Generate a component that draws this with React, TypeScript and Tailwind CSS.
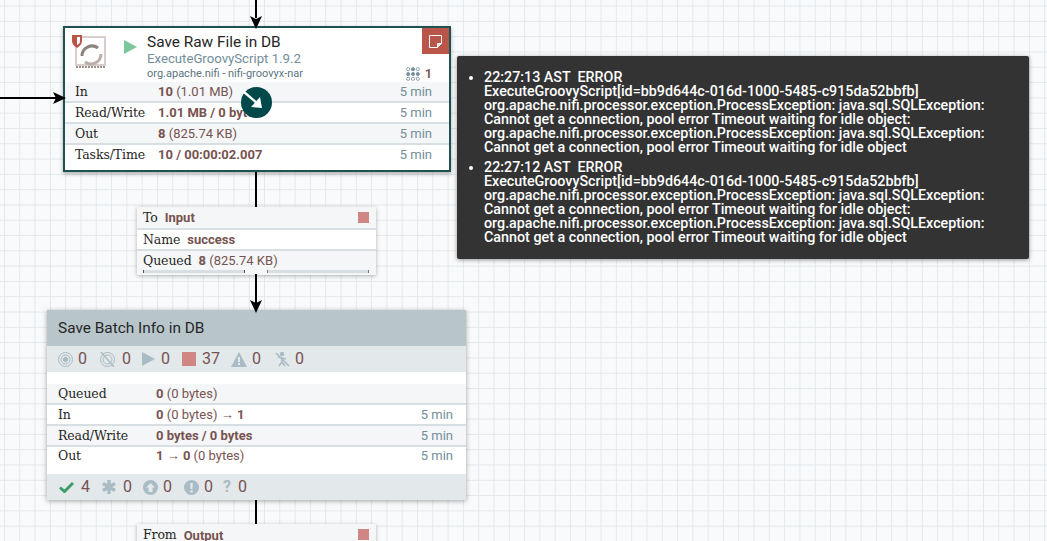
import React from 'react';

const slab = "font-['DejaVu_Serif',serif]";

const Row = ({ label, value, time, shade, h, top }: { label: string; value: React.ReactNode; time?: string; shade?: boolean; h: string; top?: boolean }) => (
    <div className={`flex ${top ? 'items-start' : 'items-center pt-[1px]'} ${h} ${shade ? 'bg-[#f4f6f7]' : 'bg-white'} border-b-2 border-[#d7dfe2] last:border-b-0`}>
        <div className={`${slab} text-[12.5px] text-[#262626] w-[93px] pl-[10px] pt-[1px] shrink-0 tracking-[-0.1px]`}>{label}</div>
        <div className="flex-1 text-[13px] text-[#775351] whitespace-nowrap">{value}</div>
        {time && <div className="text-[13px] text-[#728e9b] pr-[17px]">{time}</div>}
    </div>
);

const B = ({ children }: { children: React.ReactNode }) => <span className="font-bold">{children}</span>;

const Processor = () => (
    <div className="absolute left-[63px] top-[26px] w-[388px] h-[146px] bg-white border-2 border-[#1f5153] shadow-[0_2px_4px_rgba(0,0,0,0.3)]">
        <div className="flex h-[54px] relative">
            <div className="w-[59px] relative shrink-0">
                <svg viewBox="0 0 36 36" className="absolute left-[7px] top-[7px] w-[36px] h-[36px]">
                    <rect x="4" y="2" width="29" height="28" fill="none" stroke="#d8cfcc" strokeWidth="2" />
                    <path d="M4 32h29" stroke="#a08f8a" strokeWidth="2" strokeDasharray="2 1" />
                    <path d="M10 21a10 10 0 0 1 16-8" fill="none" stroke="#8f8380" strokeWidth="3" />
                    <path d="M29 19a10 10 0 0 1-16 8" fill="none" stroke="#bcaeaa" strokeWidth="3" />
                    <path d="M0 0h10v6c0 3-2 5-5 7-3-2-5-4-5-7z" fill="#ba554a" />
                    <path d="M5 2h3v4c0 2-1 3-3 4z" fill="#fff" />
                </svg>
            </div>
            <div className="w-[23px] shrink-0">
                <svg viewBox="0 0 13 14" className="w-[13px] h-[14px] mt-[12px]"><path d="M0 0l13 7-13 7z" fill="#7dc79c" /></svg>
            </div>
            <div className="pt-[5px] font-['Roboto',sans-serif]">
                <div className="text-[15.4px] leading-[18px] text-[#262626]">Save Raw File in DB</div>
                <div className="text-[13.2px] leading-[15px] text-[#728e9b]">ExecuteGroovyScript 1.9.2</div>
                <div className="text-[11px] leading-[14px] mt-[1px] text-[#5b7480]">org.apache.nifi - nifi-groovyx-nar</div>
            </div>
            <div className="absolute right-0 top-0 w-[27px] h-[26px] bg-[#ba554a] flex items-center justify-center">
                <svg viewBox="0 0 13 13" className="w-[13px] h-[13px]"><path d="M.5.5h12v8l-4 4h-8z" fill="none" stroke="#fff" strokeWidth="1" /><path d="M8.5 12.5v-4h4" fill="#f6d9d5" stroke="#fff" strokeWidth="1" /></svg>
            </div>
            <div className="absolute right-[17px] top-[37px] flex items-center gap-[5px]">
                <svg viewBox="0 0 14 14" className="w-[14px] h-[14px]" fill="none" stroke="#728e9b" strokeWidth="0.8">
                    <circle cx="2.2" cy="2.2" r="1.6" /><circle cx="7" cy="2.2" r="1.6" fill="#728e9b" /><circle cx="11.8" cy="2.2" r="1.6" />
                    <circle cx="2.2" cy="7" r="1.6" fill="#728e9b" /><circle cx="7" cy="7" r="1.6" fill="#728e9b" /><circle cx="11.8" cy="7" r="1.6" fill="#728e9b" />
                    <circle cx="2.2" cy="11.8" r="1.6" /><circle cx="7" cy="11.8" r="1.6" /><circle cx="11.8" cy="11.8" r="1.6" />
                </svg>
                <span className="text-[12px] font-bold text-[#775351] font-['Roboto',sans-serif]">1</span>
            </div>
        </div>
        <div className="font-['Roboto',sans-serif]">
            <Row h="h-[21px]" shade label="In" value={<><B>10</B> (1.01 MB)</>} time="5 min" />
            <Row h="h-[21px]" label="Read/Write" value={<B>1.01 MB / 0 bytes</B>} time="5 min" />
            <Row h="h-[21px]" shade label="Out" value={<><B>8</B> (825.74 KB)</>} time="5 min" />
            <Row h="h-[25px]" top label="Tasks/Time" value={<B>10 / 00:00:02.007</B>} time="5 min" />
        </div>
        <div className="absolute left-[176px] top-[59px] w-[31px] h-[31px] rounded-full bg-[#004849]">
            <svg viewBox="0 0 31 31" className="w-[31px] h-[31px]">
                <path d="M3 5l14 12" stroke="#fff" strokeWidth="2.4" fill="none" />
                <path d="M21 21L10 20L19 10z" fill="#fff" />
            </svg>
        </div>
    </div>
);

const LabelRow = ({ k, v, shade, h }: { k: string; v: React.ReactNode; shade?: boolean; h: string }) => (
    <div className={`flex items-center gap-[7px] pl-[6px] pt-[1px] ${h} ${shade ? 'bg-[#f4f6f7]' : 'bg-white'} border-b-2 border-[#d7dfe2] last:border-b-0`}>
        <span className={`${slab} text-[12.5px] text-[#262626] pt-[1px] tracking-[-0.1px]`}>{k}</span>
        <span className="text-[13px] text-[#775351] font-['Roboto',sans-serif]">{v}</span>
    </div>
);

const ConnectionLabel = () => (
    <div className="absolute left-[137px] top-[207px] w-[239px] bg-white shadow-[0_1px_4px_rgba(0,0,0,0.3)]">
        <LabelRow h="h-[23px]" shade k="To" v={<B>Input</B>} />
        <LabelRow h="h-[21px]" k="Name" v={<B>success</B>} />
        <div className="bg-[#f4f6f7] h-[24px] pl-[6px] pt-[2px]">
            <div className="flex items-center gap-[7px] h-[15px]">
                <span className={`${slab} text-[12.5px] text-[#262626] pt-[1px] tracking-[-0.1px]`}>Queued</span>
                <span className="text-[13px] text-[#775351] font-['Roboto',sans-serif]"><B>8</B> (825.74 KB)</span>
            </div>
            <div className="flex gap-[22px] mt-[2px] h-[3px]">
                <div className="w-[102px] bg-[#d7dfe2] border-x border-[#555]" />
                <div className="w-[102px] bg-[#d7dfe2] border-x border-[#777]" />
            </div>
        </div>
        <div className="absolute right-[7px] top-[5px] w-[11px] h-[11px] bg-[#d18686]" />
    </div>
);

const Stat = ({ icon, n, className }: { icon: React.ReactNode; n: string; className: string }) => (
    <div className={`flex items-center ${className}`}>
        {icon}
        <span className="text-[16px] text-[#775351]">{n}</span>
    </div>
);

const GroupRow = ({ label, value, time, shade, h }: { label: string; value: React.ReactNode; time?: string; shade?: boolean; h: string }) => (
    <div className={`flex items-center pt-[1px] shrink-0 ${h} ${shade ? 'bg-[#f4f6f7]' : 'bg-white'} border-b-2 border-[#d7dfe2]`}>
        <div className={`${slab} text-[12.5px] text-[#262626] w-[109px] pl-[11px] pt-[1px] shrink-0 tracking-[-0.1px]`}>{label}</div>
        <div className="flex-1 text-[13px] text-[#775351] whitespace-nowrap">{value}</div>
        {time && <div className="text-[13px] text-[#728e9b] pr-[13px]">{time}</div>}
    </div>
);

const Group = () => (
    <div className="absolute left-[47px] top-[310px] w-[419px] h-[190px] bg-white shadow-[0_1px_5px_rgba(0,0,0,0.35)] flex flex-col font-['Roboto',sans-serif]">
        <div className="h-[36px] bg-[#b8c6cb] flex items-center pl-[11px] pt-[1px] text-[15.4px] text-[#262626] shrink-0">Save Batch Info in DB</div>
        <div className="h-[26px] bg-[#e3e8eb] flex items-center pl-[11px] shrink-0">
            <Stat className="gap-[5px]" n="0" icon={
                <svg viewBox="0 0 15 15" className="w-[15px] h-[15px]" fill="none" stroke="#a9bbc4"><circle cx="7.5" cy="7.5" r="7" /><circle cx="7.5" cy="7.5" r="4.5" /><circle cx="7.5" cy="7.5" r="2.2" fill="#a9bbc4" /></svg>
            } />
            <Stat className="gap-[7px] ml-[13px]" n="0" icon={
                <svg viewBox="0 0 15 15" className="w-[15px] h-[15px]" fill="none" stroke="#a9bbc4"><circle cx="7.5" cy="7.5" r="7" /><circle cx="7.5" cy="7.5" r="4.5" /><path d="M1 0l13 15" strokeWidth="1.5" /></svg>
            } />
            <Stat className="gap-[6px] ml-[11px]" n="0" icon={<svg viewBox="0 0 13 14" className="w-[13px] h-[14px]"><path d="M0 0l13 7-13 7z" fill="#a9bbc4" /></svg>} />
            <Stat className="gap-[6px] ml-[12px]" n="37" icon={<div className="w-[14px] h-[14px] bg-[#d18686]" />} />
            <Stat className="gap-[5px] ml-[11px]" n="0" icon={<svg viewBox="0 0 16 15" className="w-[16px] h-[15px]"><path d="M8 0L16 15H0z" fill="#a9bbc4" /><path d="M7 5h2v5H7zM7 11h2v2H7z" fill="#e3e8eb" /></svg>} />
            <Stat className="gap-[5px] ml-[14px]" n="0" icon={
                <svg viewBox="0 0 15 15" className="w-[15px] h-[15px]" fill="none" stroke="#a9bbc4" strokeWidth="1.6"><circle cx="7" cy="2" r="1.4" fill="#a9bbc4" /><path d="M3 5l4 1 4 1M7 6v4l-3 4M7 10l3 4M1 1l13 13" /></svg>
            } />
        </div>
        <div className="h-[12px] shrink-0" />
        <GroupRow h="h-[21px]" shade label="Queued" value={<><B>0</B> (0 bytes)</>} />
        <GroupRow h="h-[21px]" label="In" value={<><B>0</B> (0 bytes) → <B>1</B></>} time="5 min" />
        <GroupRow h="h-[21px]" shade label="Read/Write" value={<B>0 bytes / 0 bytes</B>} time="5 min" />
        <div className="flex-1 flex pt-[1px] min-h-0">
            <div className={`${slab} text-[12.5px] text-[#262626] w-[109px] pl-[11px] shrink-0 leading-[16px] tracking-[-0.1px]`}>Out</div>
            <div className="flex-1 text-[13px] text-[#775351] leading-[16px]"><B>1</B> → <B>0</B> (0 bytes)</div>
            <div className="text-[13px] text-[#728e9b] pr-[13px] leading-[16px]">5 min</div>
        </div>
        <div className="h-[26px] bg-[#e3e8eb] flex items-center pl-[12px] shrink-0">
            <Stat className="gap-[7px]" n="4" icon={<svg viewBox="0 0 15 12" className="w-[15px] h-[12px]"><path d="M1 6.5l4.5 4L14 2" fill="none" stroke="#3f9d6d" strokeWidth="3" /></svg>} />
            <Stat className="gap-[7px] ml-[12px]" n="0" icon={<svg viewBox="0 0 14 14" className="w-[14px] h-[14px]" stroke="#a9bbc4" strokeWidth="3.4"><path d="M7 0v14M1 3.5l12 7M13 3.5l-12 7" /></svg>} />
            <Stat className="gap-[5px] ml-[11px]" n="0" icon={<svg viewBox="0 0 15 15" className="w-[15px] h-[15px]"><circle cx="7.5" cy="7.5" r="7.5" fill="#a9bbc4" /><path d="M7.5 3l4.5 4.5H9.5V12h-4V7.5H3z" fill="#e3e8eb" /></svg>} />
            <Stat className="gap-[5px] ml-[12px]" n="0" icon={<svg viewBox="0 0 15 15" className="w-[15px] h-[15px]"><circle cx="7.5" cy="7.5" r="7.5" fill="#a9bbc4" /><path d="M6.2 3h2.6l-.3 6h-2zM6.3 10.2h2.4v2.2H6.3z" fill="#e3e8eb" /></svg>} />
            <Stat className="gap-[6px] ml-[10px]" n="0" icon={<span className="w-[9px] text-[16px] font-bold text-[#a9bbc4] leading-none">?</span>} />
        </div>
    </div>
);

const Bulletin = ({ head, lines }: { head: string; lines: string[] }) => (
    <li className="list-disc">
        <div className="whitespace-pre">{head}</div>
        {lines.map((l, i) => <div key={i}>{l}</div>)}
    </li>
);

const Tooltip = () => (
    <div className="absolute left-[457px] top-[56px] w-[572px] h-[203px] bg-[#333333] rounded-[2px] shadow-[0_1px_4px_rgba(0,0,0,0.4)] pt-[14px] pl-[27px] text-white font-['Roboto',sans-serif] font-medium text-[14.3px] leading-[14px]">
        <ul className="flex flex-col gap-[6px]">
            <Bulletin head="22:27:13 AST  ERROR" lines={[
                'ExecuteGroovyScript[id=bb9d644c-016d-1000-5485-c915da52bbfb]',
                'org.apache.nifi.processor.exception.ProcessException: java.sql.SQLException:',
                'Cannot get a connection, pool error Timeout waiting for idle object:',
                'org.apache.nifi.processor.exception.ProcessException: java.sql.SQLException:',
                'Cannot get a connection, pool error Timeout waiting for idle object',
            ]} />
            <Bulletin head="22:27:12 AST  ERROR" lines={[
                'ExecuteGroovyScript[id=bb9d644c-016d-1000-5485-c915da52bbfb]',
                'org.apache.nifi.processor.exception.ProcessException: java.sql.SQLException:',
                'Cannot get a connection, pool error Timeout waiting for idle object:',
                'org.apache.nifi.processor.exception.ProcessException: java.sql.SQLException:',
                'Cannot get a connection, pool error Timeout waiting for idle object',
            ]} />
        </ul>
    </div>
);

// connection lines between the nodes, arrow tips sit over the node edge
const Wires = () => (
    <svg className="absolute left-0 top-0 w-[1047px] h-[541px]" viewBox="0 0 1047 541">
        <path d="M256 0V18M256 172V207M256 274V304M256 500V524M0 98H56" stroke="#000" strokeWidth="2" fill="none" />
        <path d="M250 16L256 19L262 16L256 29z M250 300L256 303L262 300L256 313z M53 92L56 98L53 104L66 98z" fill="#000" />
    </svg>
);

const App = () => (
    <div className="relative w-[1047px] h-[541px] overflow-hidden bg-[#f9fafb] bg-[linear-gradient(to_right,#e3e8eb_1px,transparent_1px),linear-gradient(to_bottom,#e3e8eb_1px,transparent_1px)] bg-[size:15.3px_15.3px] bg-[position:4px_5.6px]">
        <Processor />
        <ConnectionLabel />
        <Group />
        <div className="absolute left-[137px] top-[524px] w-[239px] h-[30px] bg-[#f4f6f7] shadow-[0_1px_4px_rgba(0,0,0,0.3)]">
            <div className="flex items-center gap-[7px] pl-[6px] h-[23px]">
                <span className={`${slab} text-[12.5px] text-[#262626] tracking-[-0.1px]`}>From</span>
                <span className="text-[13px] font-bold text-[#775351] font-['Roboto',sans-serif]">Output</span>
            </div>
            <div className="absolute right-[7px] top-[5px] w-[11px] h-[11px] bg-[#d18686]" />
        </div>
        <Wires />
        <Tooltip />
    </div>
);

export default App;
